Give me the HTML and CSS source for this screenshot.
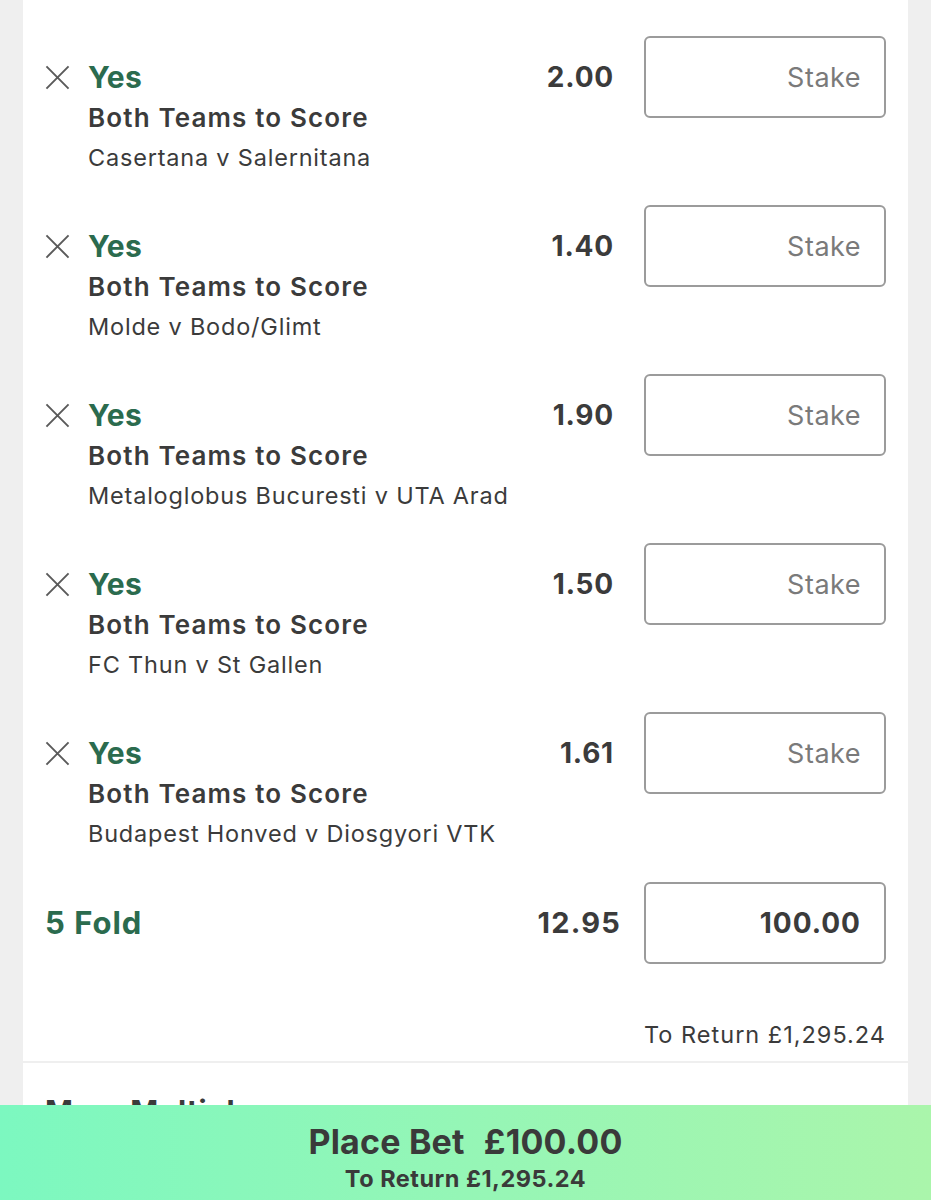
FILE: index.html
```html
<!DOCTYPE html>
<html>
<head>
<meta charset="utf-8">
<link rel="stylesheet" href="styles.css">
</head>
<body>
<div class="page">
  <section class="card">
    <div class="sel">
      <div class="sel-left">
        <svg class="x" viewBox="0 0 26 26"><path d="M1.5 1.5 L24.5 24.5 M24.5 1.5 L1.5 24.5"/></svg>
        <div class="sel-text">
          <div class="pick">Yes</div>
          <div class="market">Both Teams to Score</div>
          <div class="event">Casertana v Salernitana</div>
        </div>
      </div>
      <div class="odds">2.00</div>
      <div class="stake placeholder">Stake</div>
    </div>
    <div class="sel">
      <div class="sel-left">
        <svg class="x" viewBox="0 0 26 26"><path d="M1.5 1.5 L24.5 24.5 M24.5 1.5 L1.5 24.5"/></svg>
        <div class="sel-text">
          <div class="pick">Yes</div>
          <div class="market">Both Teams to Score</div>
          <div class="event">Molde v Bodo/Glimt</div>
        </div>
      </div>
      <div class="odds">1.40</div>
      <div class="stake placeholder">Stake</div>
    </div>
    <div class="sel">
      <div class="sel-left">
        <svg class="x" viewBox="0 0 26 26"><path d="M1.5 1.5 L24.5 24.5 M24.5 1.5 L1.5 24.5"/></svg>
        <div class="sel-text">
          <div class="pick">Yes</div>
          <div class="market">Both Teams to Score</div>
          <div class="event">Metaloglobus Bucuresti v UTA Arad</div>
        </div>
      </div>
      <div class="odds">1.90</div>
      <div class="stake placeholder">Stake</div>
    </div>
    <div class="sel">
      <div class="sel-left">
        <svg class="x" viewBox="0 0 26 26"><path d="M1.5 1.5 L24.5 24.5 M24.5 1.5 L1.5 24.5"/></svg>
        <div class="sel-text">
          <div class="pick">Yes</div>
          <div class="market">Both Teams to Score</div>
          <div class="event">FC Thun v St Gallen</div>
        </div>
      </div>
      <div class="odds">1.50</div>
      <div class="stake placeholder">Stake</div>
    </div>
    <div class="sel">
      <div class="sel-left">
        <svg class="x" viewBox="0 0 26 26"><path d="M1.5 1.5 L24.5 24.5 M24.5 1.5 L1.5 24.5"/></svg>
        <div class="sel-text">
          <div class="pick">Yes</div>
          <div class="market">Both Teams to Score</div>
          <div class="event">Budapest Honved v Diosgyori VTK</div>
        </div>
      </div>
      <div class="odds">1.61</div>
      <div class="stake placeholder">Stake</div>
    </div>
    <div class="fold">
      <div class="fold-name">5 Fold</div>
      <div class="odds fold-odds">12.95</div>
      <div class="stake value">100.00</div>
    </div>
    <div class="return">To Return £1,295.24</div>
  </section>
  <section class="card more">
    <div class="more-title">More Multiples</div>
  </section>
</div>
<div class="placebar">
  <div class="place-main"><span>Place Bet</span><span>£100.00</span></div>
  <div class="place-sub">To Return £1,295.24</div>
</div>
</body>
</html>
```

FILE: styles.css
```css
* { box-sizing: border-box; }
html, body { margin: 0; padding: 0; }
body {
  background: #efefef;
  font-family: Inter, "Noto Sans", "Liberation Sans", sans-serif;
  color: #3b3b3b;
  width: 931px;
  height: 1200px;
  overflow: hidden;
}
.page {
  display: flex;
  flex-direction: column;
  gap: 2px;
  padding: 0 23px;
}
.card {
  background: #fff;
  padding: 0 22px 0 22px;
}
.sel {
  display: flex;
  align-items: flex-start;
  height: 169px;
  padding-top: 36px;
}
.sel-left {
  flex: 1;
  display: flex;
  align-items: flex-start;
  padding-top: 21px;
}
.x {
  width: 25px;
  height: 25px;
  margin-top: 8px;
  margin-right: 18px;
  flex: none;
}
.x path {
  stroke: #5a5a5a;
  stroke-width: 2;
  fill: none;
}
.sel-text { display: flex; flex-direction: column; }
.pick {
  font-size: 30px;
  font-weight: 700;
  color: #2b6b4e;
  line-height: 40px;
  letter-spacing: 0.2px;
}
.market {
  font-size: 26px;
  font-weight: 600;
  line-height: 41px;
  color: #3b3b3b;
  letter-spacing: 1.15px;
}
.event {
  font-size: 23.5px;
  font-weight: 400;
  line-height: 39px;
  color: #3b3b3b;
  letter-spacing: 0.8px;
}
.odds {
  height: 82px;
  display: flex;
  align-items: center;
  font-size: 28px;
  font-weight: 700;
  color: #3b3b3b;
  margin-right: 30px;
  letter-spacing: 0.8px;
}
.stake {
  width: 242px;
  height: 82px;
  border: 2px solid #9b9b9b;
  border-radius: 6px;
  display: flex;
  align-items: center;
  justify-content: flex-end;
  padding-right: 23px;
  font-size: 27px;
  flex: none;
}
.placeholder { color: #7a7a7a; font-weight: 400; letter-spacing: 0.5px; }
.value { color: #3b3b3b; font-weight: 700; font-size: 28px; letter-spacing: 1px; }
.fold {
  display: flex;
  align-items: center;
  padding-top: 36px;
  height: 119px;
}
.fold-name {
  flex: 1;
  font-size: 31px;
  font-weight: 700;
  color: #2b6b4e;
  letter-spacing: 1px;
}
.fold-odds { margin-right: 23px; font-size: 29px; letter-spacing: 1.2px; }
.return {
  text-align: right;
  font-size: 23.5px;
  line-height: 30px;
  padding: 56px 0 11px;
  color: #3b3b3b;
  letter-spacing: 1px;
}
.more {
  height: 200px;
  padding-top: 28px;
}
.more-title {
  font-size: 30px;
  font-weight: 700;
  line-height: 40px;
  color: #3b3b3b;
  letter-spacing: 0.5px;
}
.placebar {
  position: fixed;
  left: 0;
  right: 0;
  bottom: 0;
  height: 95px;
  background: linear-gradient(90deg, #7cf8c0 0%, #95f6b6 50%, #aaf5ab 100%);
  display: flex;
  flex-direction: column;
  align-items: center;
  padding-top: 17px;
}
.place-main {
  display: flex;
  gap: 19px;
  font-size: 34px;
  font-weight: 700;
  line-height: 40px;
  color: #3a3a3a;
  letter-spacing: 0.2px;
}
.place-sub {
  font-size: 23.5px;
  font-weight: 700;
  line-height: 34px;
  color: #3a3a3a;
  letter-spacing: 0.5px;
}
```
